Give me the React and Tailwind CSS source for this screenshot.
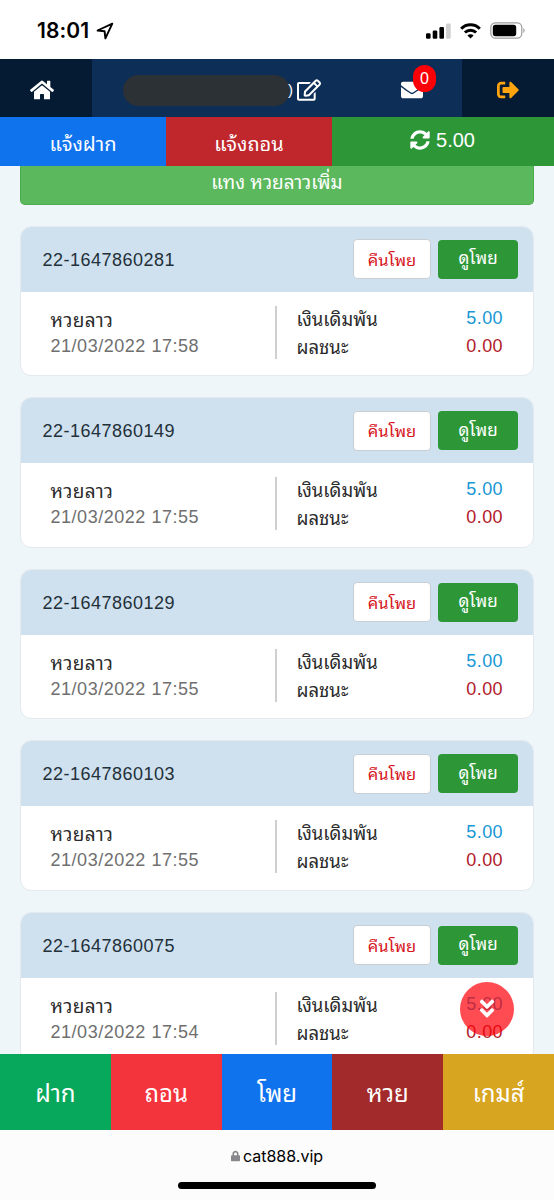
import { FaAngleDoubleDown, FaEnvelope, FaHome, FaLock, FaRegEdit, FaSignOutAlt, FaSyncAlt } from 'react-icons/fa'

const bets = [
  { id: '22-1647860281', date: '21/03/2022 17:58' },
  { id: '22-1647860149', date: '21/03/2022 17:55' },
  { id: '22-1647860129', date: '21/03/2022 17:55' },
  { id: '22-1647860103', date: '21/03/2022 17:55' },
  { id: '22-1647860075', date: '21/03/2022 17:54' },
]

function StatusBar() {
  return (
    <div className="flex h-[59px] shrink-0 items-center justify-between bg-white pt-0.5 pr-[28px] pl-[37px] text-black">
      <div className="flex items-center gap-[7px]">
        <span className="font-['Inter'] text-[21px] leading-6 font-semibold tracking-[0.1px]">18:01</span>
        <svg className="h-[18px] w-[18px]" viewBox="0 0 18 18" fill="none" stroke="currentColor" strokeWidth="1.9" strokeLinejoin="round">
          <path d="M16.3 1.7 1.6 8.500l7 .8.8 7z" />
        </svg>
      </div>
      <div className="flex items-center">
        <svg className="mr-[9px] h-4 w-[25px]" viewBox="0 0 25 16">
          <rect x="0" y="10.3" width="4.6" height="5.4" rx="1.3" />
          <rect x="6.7" y="7.5" width="4.6" height="8.2" rx="1.3" />
          <rect x="13.4" y="4" width="4.6" height="11.7" rx="1.3" />
          <rect x="20.1" y="0.4" width="4.6" height="15.3" rx="1.3" fill="#cfcfcf" />
        </svg>
        <svg className="mr-[9px] h-4 w-[21px]" viewBox="0 0 21 16" fill="none" stroke="black" strokeWidth="3">
          <path d="M1.2 5.7a13.2 13.2 0 0 1 18.6 0" />
          <path d="M4.9 9.5a8 8 0 0 1 11.2 0" />
          <path d="M10.5 15.6 7.4 12.5a4.4 4.4 0 0 1 6.2 0z" fill="black" stroke="none" />
        </svg>
        <svg className="h-[17px] w-[36px]" viewBox="0 0 36 17">
          <rect x="0.8" y="0.8" width="31" height="15.4" rx="4.6" fill="none" stroke="#9b9b9b" strokeWidth="1.2" />
          <rect x="2.8" y="2.8" width="23.4" height="11.4" rx="2.6" />
          <path d="M33.4 6v5c1.6-.7 1.6-4.3 0-5z" fill="#9b9b9b" />
        </svg>
      </div>
    </div>
  )
}

function NavBar() {
  return (
    <div className="flex h-[58px] shrink-0 bg-[#0c2e57] text-white">
      <div className="flex w-[92px] items-center justify-center bg-[#051a33] pt-1 pr-2">
        <FaHome className="h-[24px] w-[24px]" />
      </div>
      <div className="flex flex-1 items-center pt-1 pl-[31px]">
        <div className="h-[31px] w-[167px] rounded-full bg-[#2c3136]" />
        <span className="-ml-0.5 w-[9px] text-[15px] leading-5">)</span>
        <FaRegEdit className="h-[22px] w-[24px]" />
        <div className="relative ml-[80px]">
          <FaEnvelope className="h-[22px] w-[22px]" />
          <span className="absolute -top-[14px] left-[12px] flex h-[27px] w-[23px] items-center justify-center rounded-full bg-[#fb0007] text-[16px] leading-none">
            0
          </span>
        </div>
      </div>
      <div className="flex w-[92px] items-center justify-center bg-[#051a33] pt-1">
        <FaSignOutAlt className="h-[22px] w-[22px] text-[#ffa40e]" />
      </div>
    </div>
  )
}

function ActionBar() {
  return (
    <div className="flex h-[49px] shrink-0 text-[20px] text-white">
      <div className="flex w-[166px] items-center justify-center bg-[#1073ee] pt-1">แจ้งฝาก</div>
      <div className="flex w-[166px] items-center justify-center bg-[#c0272d] pt-1">แจ้งถอน</div>
      <div className="flex flex-1 items-center justify-center gap-1.5 bg-[#2d9738] pr-px pb-[3px] text-[20px]">
        <FaSyncAlt className="h-5 w-5" />
        <span>5.00</span>
      </div>
    </div>
  )
}

function BetCard({ bet }) {
  return (
    <div className="h-[150.5px] shrink-0 overflow-hidden rounded-[11px] border border-[#e3e9ec] bg-white">
      <div className="flex h-[65px] items-center bg-[#cfe0ee] pr-[15px] pl-[21.5px]">
        <span className="flex-1 pt-0.5 text-[18px] tracking-[0.5px] text-[#22303a]">{bet.id}</span>
        <button className="mr-[7px] h-[40px] w-[78px] rounded-[4px] border border-[#c9ced3] bg-white pt-0.5 text-[16.5px] text-[#d6151d]">
          คืนโพย
        </button>
        <button className="h-[39px] w-[80px] rounded-[4px] bg-[#2d9738] text-[17px] text-white">ดูโพย</button>
      </div>
      <div className="flex pt-[14px] pr-[30px] pl-[29.5px] text-[18px] leading-[28px] text-[#2b2b2b]">
        <div className="h-[53px] w-[226px] border-r-2 border-[#cfcfcf]">
          <div className="text-[19px] leading-[29px] tracking-[0.3px]">หวยลาว</div>
          <div className="leading-[23px] tracking-[0.53px] text-[#6f6f6f]">{bet.date}</div>
        </div>
        <div className="flex-1 pl-5 text-[18.5px]">
          <div>เงินเดิมพัน</div>
          <div>ผลชนะ</div>
        </div>
        <div className="-mt-0.5 text-right tracking-[0.42px]">
          <div className="text-[#1898d5]">5.00</div>
          <div className="text-[#b1202a]">0.00</div>
        </div>
      </div>
    </div>
  )
}

function BottomTabs() {
  return (
    <div className="grid h-[76px] shrink-0 grid-cols-5 text-center text-[24px] leading-[79px] text-white">
      <div className="bg-[#07a85c]">ฝาก</div>
      <div className="bg-[#f3343d]">ถอน</div>
      <div className="bg-[#1073ee]">โพย</div>
      <div className="bg-[#a32a2a]">หวย</div>
      <div className="bg-[#d8a520]">เกมส์</div>
    </div>
  )
}

export default function App() {
  return (
    <div className="flex h-[1200px] w-[554px] flex-col overflow-hidden bg-[#eff6f9] font-['Liberation_Sans','Noto_Sans_Thai_Looped','Loma','Waree','Garuda','Tlwg_Typo','FreeSans',serif]">
      <StatusBar />
      <NavBar />
      <ActionBar />

      <div className="relative flex min-h-0 flex-1 flex-col gap-[21px] overflow-hidden px-5">
        <div className="-mb-[0.5px] flex h-[39px] shrink-0 items-center justify-center rounded-b-[5px] border border-t-0 border-[#4cab50] bg-[#5cb85c] pb-1 text-[19px] text-white">
          แทง หวยลาวเพิ่ม
        </div>
        {bets.map((bet) => (
          <BetCard key={bet.id} bet={bet} />
        ))}
        <div className="absolute right-[40px] bottom-[18px] flex h-[54px] w-[54px] items-center justify-center rounded-full bg-[#ff0008]/70 pb-0.5 text-white">
          <FaAngleDoubleDown className="h-[23px] w-[22px]" />
        </div>
      </div>

      <BottomTabs />

      <div className="flex h-[70px] shrink-0 flex-col items-center bg-[#fcfcfd] pt-[14px]">
        <div className="flex h-[24px] items-center gap-[3px] font-['Inter'] text-[16px] text-black">
          <FaLock className="h-[12px] w-[9px] text-[#88888c]" />
          cat888.vip
        </div>
        <div className="mt-[14px] h-[7px] w-[198px] rounded-full bg-black" />
      </div>
    </div>
  )
}
